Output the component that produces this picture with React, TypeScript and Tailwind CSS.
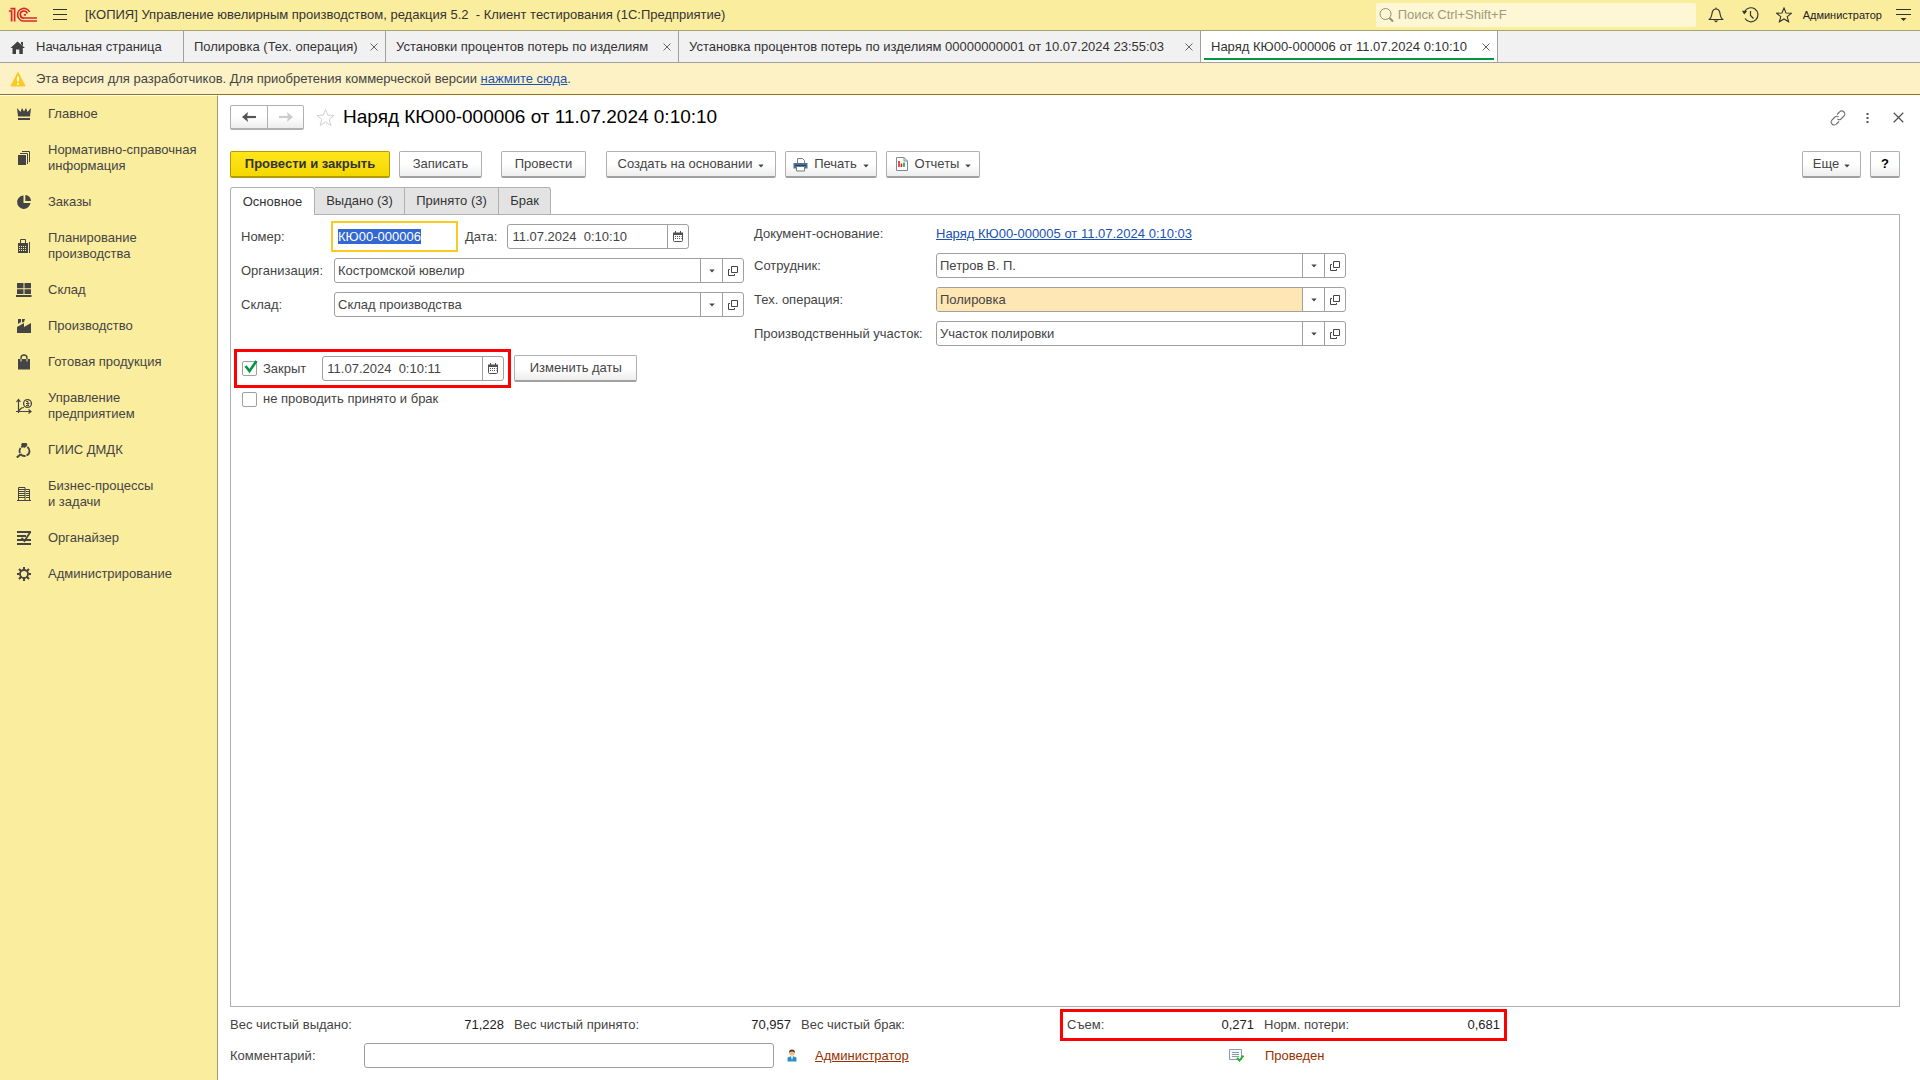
import { useEffect, useRef } from 'react'
import type { ReactNode } from 'react'

function Svg({ w = 16, h = 16, className, children }: {
  w?: number
  h?: number
  className?: string
  children: ReactNode
}) {
  return (
    <svg width={w} height={h} viewBox={`0 0 ${w} ${h}`} fill="none" className={`shrink-0 ${className ?? ''}`} aria-hidden="true">
      {children}
    </svg>
  )
}

function Logo() {
  return (
    <Svg w={30} h={16} className="text-[#d9252b]">
      <g stroke="currentColor" strokeWidth="1.7">
        <path d="M0.8 4 H3.6 V14.5" />
        <path d="M2.5 1.6 H6.6 V14.5" />
        <path d="M21.6 5 A6.3 6.3 0 1 0 16.2 14 H29" />
        <path d="M19.2 6.6 A3.5 3.5 0 1 0 16.4 11 H29" />
        <path d="M15.8 7.8 H18" />
      </g>
    </Svg>
  )
}

function Caret({ className }: { className?: string }) {
  return (
    <Svg w={6} h={4} className={className}>
      <path d="M0.3 0.4 H5.7 L3 3.5 Z" fill="#444" />
    </Svg>
  )
}

function Cross({ size = 8 }: { size?: number }) {
  return (
    <svg width={size} height={size} viewBox="0 0 9 9" fill="none" className="shrink-0" aria-hidden="true">
      <path d="M0.6 0.6 L8.4 8.4 M8.4 0.6 L0.6 8.4" stroke="#505050" strokeWidth="1" />
    </svg>
  )
}

function CalendarIcon() {
  return (
    <Svg w={10} h={11}>
      <path d="M0.5 2 V9.5 Q0.5 10.5 1.5 10.5 H8.5 Q9.5 10.5 9.5 9.5 V2" stroke="#505050" />
      <path d="M0 1.5 H10 V4 H0 Z" fill="#505050" />
      <path d="M2.5 0 V2 M7.5 0 V2" stroke="#505050" />
      <path d="M2 5.5 H8.5 M2 7.5 H8.5" stroke="#505050" strokeDasharray="1 1" />
    </Svg>
  )
}

function OpenIcon() {
  return (
    <Svg w={10} h={10}>
      <path d="M3.5 0.5 H9.5 V6.5 H3.5 Z" stroke="#444" />
      <path d="M2 3.5 H0.5 V9.5 H6.5 V8" stroke="#444" />
    </Svg>
  )
}

const SECTIONS: { title: string[]; icon: ReactNode }[] = [
  {
    title: ['Главное'],
    icon: <path d="M1 2 L4.5 6 L6 2 L8 5.5 L10 2 L11.5 6 L15 2 L14 10.5 H2 Z M2 12 H14 V14 H2 Z" fill="currentColor" />,
  },
  {
    title: ['Нормативно-справочная', 'информация'],
    icon: (
      <>
        <path d="M2 5 H10 V15 H2 Z" fill="currentColor" />
        <path d="M4 3.5 H11.5 V14 M6 1.5 H13.5 V12" stroke="currentColor" />
      </>
    ),
  },
  {
    title: ['Заказы'],
    icon: (
      <>
        <path d="M7.5 1.5 A6.7 6.7 0 1 0 14.5 9 H7.5 Z" fill="currentColor" />
        <path d="M9.3 1 A6 6 0 0 1 15 7 H9.3 Z" fill="currentColor" />
      </>
    ),
  },
  {
    title: ['Планирование', 'производства'],
    icon: (
      <>
        <path d="M4.5 5 V1.5 H9.5 V5 M13.5 4 V15" stroke="currentColor" />
        <path d="M2 5 H12 V15 H2 Z" fill="currentColor" />
        <path d="M3 8.5 H11 M3 10.5 H11 M3 12.5 H11" stroke="#fbed9e" strokeDasharray="1 1" />
      </>
    ),
  },
  {
    title: ['Склад'],
    icon: <path d="M1 1 H7.5 V6.3 H1 Z M8.5 1 H15 V6.3 H8.5 Z M1 7.3 H7.5 V12 H1 Z M8.5 7.3 H15 V12 H8.5 Z M0 13 H15.5 V15 H0 Z" fill="currentColor" />,
  },
  {
    title: ['Производство'],
    icon: <path d="M2 1 H5 V4 L2 6 Z M6 1 H9 L8 4 L6 4.5 Z M1 9 L8 5 V9 L15 5 V15 H1 Z" fill="currentColor" />,
  },
  {
    title: ['Готовая продукция'],
    icon: (
      <>
        <path d="M2 5 H14 V15.5 H2 Z" fill="currentColor" />
        <path d="M5 7 V4 A3 3 0 0 1 11 4 V7" stroke="currentColor" strokeWidth="1.4" />
        <path d="M5 5 V7.5 M11 5 V7.5" stroke="#fbed9e" />
      </>
    ),
  },
  {
    title: ['Управление', 'предприятием'],
    icon: (
      <>
        <path d="M2.5 15 V2 M0.5 4 L2.5 1.5 L4.5 4 M0 13.5 H15 M12.5 11.5 L15 13.5 L12.5 15.5 M3 12.5 L5.5 10 L8 9.5" stroke="currentColor" strokeWidth="1.2" />
        <circle cx="11.5" cy="5.5" r="3.9" stroke="currentColor" strokeWidth="1.3" />
        <path d="M10 3.5 H12 V7.5 M10 5.5 H13.5 M10 7.5 H13" stroke="currentColor" />
      </>
    ),
  },
  {
    title: ['ГИИС ДМДК'],
    icon: (
      <>
        <circle cx="8.5" cy="9" r="5" stroke="currentColor" strokeWidth="1.8" strokeDasharray="5.5 1" />
        <path d="M4.8 12.2 L0.8 15.5" stroke="currentColor" strokeWidth="2" />
        <path d="M6 1 H10.5 L11.5 3 L8.3 6 L5 3 Z" fill="currentColor" />
      </>
    ),
  },
  {
    title: ['Бизнес-процессы', 'и задачи'],
    icon: (
      <>
        <path d="M2.5 15 V1.5 H9 V15 M9 3.5 H13.5 V15 M1 14.5 H15" stroke="currentColor" />
        <path d="M3 3.5 H9 M3 5.5 H9 M3 7.5 H9 M3 9.5 H9 M3 11.5 H9 M10 5.5 H13 M10 7.5 H13 M10 9.5 H13 M10 11.5 H13" stroke="currentColor" />
      </>
    ),
  },
  {
    title: ['Органайзер'],
    icon: <path d="M1 2 H15 M1 6 H10 M1 10 H15 M1 14 H15 M14 2.5 L8.5 11 L5.5 8" stroke="currentColor" strokeWidth="1.8" />,
  },
  {
    title: ['Администрирование'],
    icon: (
      <>
        <circle cx="8" cy="8" r="4" stroke="currentColor" strokeWidth="1.8" />
        <path d="M8 1 V3.5 M8 12.5 V15 M1 8 H3.5 M12.5 8 H15 M3 3 L5 5 M11 11 L13 13 M13 3 L11 5 M5 11 L3 13" stroke="currentColor" strokeWidth="2" />
      </>
    ),
  },
]

const OPEN_TABS = [
  { title: 'Полировка (Тех. операция)', width: 'w-[202px]' },
  { title: 'Установки процентов потерь по изделиям', width: 'w-[293px]' },
  { title: 'Установка процентов потерь по изделиям 00000000001 от 10.07.2024 23:55:03', width: 'w-[522px]' },
  { title: 'Наряд КЮ00-000006 от 11.07.2024 0:10:10', width: 'w-[297px]' },
]

const PAGES = [
  { title: 'Основное', width: 'w-[85px]' },
  { title: 'Выдано (3)', width: 'w-[90px]' },
  { title: 'Принято (3)', width: 'w-[94px]' },
  { title: 'Брак', width: 'w-[52px]' },
]

function Button({ children, className }: { children: ReactNode; className?: string }) {
  return (
    <button
      type="button"
      className={`flex h-[27px] items-center justify-center rounded-[2px] border border-b-2 border-[#b0b0b0] border-b-[#a0a0a0] bg-linear-to-b from-white from-50% to-[#ededed] whitespace-nowrap ${className ?? ''}`}
    >
      {children}
    </button>
  )
}

function DateField({ id, value }: { id: string; value: string }) {
  return (
    <div className="flex h-[25px] w-[182px] rounded-[3px] border border-[#a0a0a0] bg-white">
      <input id={id} defaultValue={value} className="min-w-0 flex-1 px-1 outline-none" />
      <button type="button" aria-label="Выбрать дату" className="flex w-[21px] items-center justify-center border-l border-[#a0a0a0]">
        <CalendarIcon />
      </button>
    </div>
  )
}

function RefField({ id, value, fill }: { id: string; value: string; fill?: string }) {
  return (
    <div className="flex h-[25px] w-[410px] rounded-[3px] border border-[#a0a0a0] bg-white">
      <div className="relative flex flex-1">
        <select id={id} className={`flex-1 appearance-none rounded-l-[2px] px-[3px] outline-none ${fill ?? ''}`}>
          <option>{value}</option>
        </select>
        <span className="pointer-events-none absolute inset-y-0 right-0 flex w-[22px] items-center justify-center border-l border-[#a0a0a0] bg-white">
          <Caret />
        </span>
      </div>
      <button type="button" aria-label="Открыть" className="flex w-[21px] items-center justify-center border-l border-[#a0a0a0]">
        <OpenIcon />
      </button>
    </div>
  )
}

function Check({ id, label, checked }: { id: string; label: string; checked?: boolean }) {
  return (
    <div className="flex items-center gap-[6px]">
      <span className="relative flex">
        <input id={id} type="checkbox" defaultChecked={checked} className="peer size-[15px] appearance-none rounded-[2px] border border-[#a0a0a0] bg-white" />
        <span className="pointer-events-none absolute -top-px left-[2px] hidden peer-checked:block">
          <Svg w={14} h={13}>
            <path d="M1.5 6 L5.5 11 L12.5 1" stroke="#009646" strokeWidth="2.6" />
          </Svg>
        </span>
      </span>
      <label htmlFor={id}>{label}</label>
    </div>
  )
}

function TopBar() {
  return (
    <header className="flex h-[31px] items-center border-b border-[#a9a36c] bg-[#fbed9e] pr-[9px] pl-2">
      <Logo />
      <button type="button" aria-label="Меню" className="ml-[15px]">
        <Svg w={14} h={12}>
          <path d="M0 0.5 H14 M0 5.5 H14 M0 10.5 H14" stroke="#333" />
        </Svg>
      </button>
      <div className="ml-[18px] whitespace-pre">[КОПИЯ] Управление ювелирным производством, редакция 5.2  - Клиент тестирования (1С:Предприятие)</div>

      <div className="ml-auto flex h-6 w-80 items-center gap-1 rounded-[2px] bg-[#fdf7d5] pl-[3px]">
        <Svg w={15} h={16} className="text-[#96906f]">
          <circle cx="6.5" cy="7" r="5.5" stroke="currentColor" />
          <path d="M10.5 11 L14 14.5" stroke="currentColor" strokeWidth="2" />
        </Svg>
        <input aria-label="Поиск" placeholder="Поиск Ctrl+Shift+F" className="min-w-0 flex-1 outline-none placeholder:text-[#a09a7c]" />
      </div>
      <button type="button" aria-label="Уведомления" className="ml-3">
        <Svg>
          <path d="M1.5 12.5 H14.5 C11.5 9.5 12.5 7 11.5 4.5 C11 3 10 2 8 2 C6 2 5 3 4.5 4.5 C3.5 7 4.5 9.5 1.5 12.5 Z" stroke="#333" strokeWidth="1.2" />
          <path d="M5.5 13.5 H10.5 L8 15.5 Z" fill="#333" />
          <path d="M8 0.5 V2" stroke="#333" />
        </Svg>
      </button>
      <button type="button" aria-label="История" className="ml-[18px]">
        <Svg w={17} h={16}>
          <path d="M2.5 5 A7 7 0 1 1 3 11.5" stroke="#333" strokeWidth="1.2" />
          <path d="M0 3.8 L5.2 4 L2.2 7.5 Z" fill="#333" />
          <path d="M8.5 4 V8.5 L11.5 11.5" stroke="#333" strokeWidth="1.2" />
        </Svg>
      </button>
      <button type="button" aria-label="Избранное" className="ml-[17px]">
        <Svg>
          <path d="M8 1 L10 6 L15.3 6.3 L11.2 9.7 L12.6 14.8 L8 12 L3.4 14.8 L4.8 9.7 L0.7 6.3 L6 6 Z" stroke="#333" strokeWidth="1.1" />
        </Svg>
      </button>
      <a href="#user" className="ml-[11px] text-[11px] text-[#222]">Администратор</a>
      <button type="button" aria-label="Настройки" className="ml-[14px]">
        <Svg w={15} h={14}>
          <path d="M0 1.5 H15 M0 6.5 H15" stroke="#333" strokeWidth="1.2" />
          <path d="M4.5 10 H10.5 L7.5 13 Z" fill="#333" />
        </Svg>
      </button>
    </header>
  )
}

function WindowTabs() {
  return (
    <nav className="flex h-8 border-b border-[#a0a0a0] bg-[#f1f1f1]">
      <a href="#home" className="flex w-[184px] items-center gap-[10px] border-r border-[#a0a0a0] pl-[10px]">
        <Svg>
          <path d="M7.5 2.5 L15 9 H12.8 V15 H9.3 V10.5 H6 V15 H2.5 V9 H0.5 Z M11 3 H13 V7 L11 5 Z" fill="#404040" />
        </Svg>
        Начальная страница
      </a>
      {OPEN_TABS.map((tab, i) => {
        const active = i === OPEN_TABS.length - 1
        return (
          <div
            key={tab.title}
            className={`relative flex items-center justify-between border-r border-[#a0a0a0] pr-[7px] pl-[10px] whitespace-nowrap ${tab.width} ${active ? 'bg-white' : ''}`}
          >
            <a href="#tab">{tab.title}</a>
            <button type="button" aria-label="Закрыть"><Cross /></button>
            {active && <span className="absolute right-[3px] bottom-[2px] left-[3px] h-[2px] bg-[#009646]" />}
          </div>
        )
      })}
    </nav>
  )
}

function Sidebar() {
  return (
    <nav className="w-[218px] shrink-0 border-t border-r border-t-white border-r-[#a09a6c] bg-[#fbed9e]">
      {SECTIONS.map(s => (
        <a key={s.title[0]} href="#section" className="flex items-center gap-4 py-[10px] pl-4 leading-4">
          <Svg className="text-[#444]">{s.icon}</Svg>
          <span>
            {s.title.map(line => <span key={line} className="block">{line}</span>)}
          </span>
        </a>
      ))}
    </nav>
  )
}

function FormHeader() {
  return (
    <div className="flex h-[25px] items-center">
      <div className="flex h-[25px] rounded-[2px] border border-b-2 border-[#b0b0b0] bg-linear-to-b from-white from-50% to-[#ededed]">
        <button type="button" aria-label="Назад" className="flex w-[37px] items-center justify-center border-r border-[#b0b0b0]">
          <Svg w={14} h={10}>
            <path d="M14 5 H3" stroke="#555" strokeWidth="2.2" />
            <path d="M6 0 L0 5 L6 10 L5 5 Z" fill="#555" />
          </Svg>
        </button>
        <button type="button" aria-label="Вперед" className="flex w-[35px] items-center justify-center">
          <Svg w={14} h={10}>
            <path d="M0 5 H11" stroke="#ccc" strokeWidth="2.2" />
            <path d="M8 0 L14 5 L8 10 L9 5 Z" fill="#ccc" />
          </Svg>
        </button>
      </div>
      <button type="button" aria-label="В избранное" className="ml-3">
        <Svg w={19} h={19}>
          <path d="M9.5 1.5 L11.8 7.2 L18 7.5 L13.2 11.4 L14.9 17.5 L9.5 14 L4.1 17.5 L5.8 11.4 L1 7.5 L7.2 7.2 Z" stroke="#d0d0d0" />
        </Svg>
      </button>
      <h1 className="ml-2 pb-[2px] text-[19px] text-black">Наряд КЮ00-000006 от 11.07.2024 0:10:10</h1>
      <div className="-mr-1 ml-auto flex items-center">
        <button type="button" aria-label="Ссылка">
          <Svg>
            <path d="M7 4.5 L9.5 2 A2.8 2.8 0 0 1 14 6 L11 9 A2.6 2.6 0 0 1 7.5 9 M9 11.5 L6.5 14 A2.8 2.8 0 0 1 2 10 L5 7 A2.6 2.6 0 0 1 8.5 7" stroke="#707070" strokeWidth="1.1" />
          </Svg>
        </button>
        <button type="button" aria-label="Еще" className="ml-5">
          <Svg w={3} h={12}>
            <path d="M0.5 1 H2.5 V3 H0.5 Z M0.5 5 H2.5 V7 H0.5 Z M0.5 9 H2.5 V11 H0.5 Z" fill="#555" />
          </Svg>
        </button>
        <button type="button" aria-label="Закрыть" className="ml-6"><Cross size={11} /></button>
      </div>
    </div>
  )
}

function Toolbar() {
  return (
    <div className="mt-[21px] flex items-center">
      <button type="button" className="h-[27px] w-40 rounded-[2px] border border-b-2 border-[#b39b00] bg-linear-to-b from-[#ffe51a] to-[#f5d800] font-bold text-[#333]">
        Провести и закрыть
      </button>
      <Button className="ml-[9px] w-[83px]">Записать</Button>
      <Button className="ml-[19px] w-[85px]">Провести</Button>
      <Button className="ml-5 w-[170px] gap-[6px]">Создать на основании <Caret className="mt-1" /></Button>
      <Button className="ml-[9px] w-[92px] gap-[6px]">
        <Svg w={15} h={15}>
          <path d="M4.5 6 V1.5 H9.5 L11.5 3.5 V6" fill="#fff" stroke="#6d7f92" />
          <path d="M0.5 6 H14.5 V11.5 H0.5 Z" fill="#4a7096" />
          <path d="M2 8.5 H13" stroke="#23415f" />
          <path d="M3.5 9.5 H11.5 V14 H3.5 Z" fill="#fff" stroke="#6d7f92" />
        </Svg>
        Печать <Caret className="mt-1" />
      </Button>
      <Button className="ml-[9px] w-[94px] gap-[6px]">
        <Svg w={14} h={14}>
          <path d="M1.5 0.5 H9 L12.5 4 V13.5 H1.5 Z" fill="#fff" stroke="#7d8b99" />
          <path d="M9 0.5 V4 H12.5" stroke="#7d8b99" />
          <path d="M4 4 V10 M6.5 6.5 V10" stroke="#e02020" strokeWidth="1.6" />
          <path d="M9 5.5 V10" stroke="#20a030" strokeWidth="1.6" />
        </Svg>
        Отчеты <Caret className="mt-1" />
      </Button>
      <Button className="ml-auto w-[59px] gap-[5px]">Еще <Caret className="mt-1" /></Button>
      <Button className="ml-[9px] w-[30px] font-bold text-black">?</Button>
    </div>
  )
}

function MainPage() {
  const numberRef = useRef<HTMLInputElement>(null)

  useEffect(() => {
    numberRef.current?.focus()
    numberRef.current?.select()
  }, [])

  return (
    <div className="flex pt-[6px] pl-[3px]">
      <div>
        <div className="flex items-center pl-[7px]">
          <label htmlFor="number" className="w-[90px]">Номер:</label>
          <input
            id="number"
            ref={numberRef}
            defaultValue="КЮ00-000006"
            className="h-[31px] w-[127px] border-2 border-[#fbca1f] px-[5px] outline-none selection:bg-[#3367d1] selection:text-white"
          />
          <label htmlFor="date" className="mr-[10px] ml-[7px]">Дата:</label>
          <DateField id="date" value="11.07.2024  0:10:10" />
        </div>
        <div className="mt-[6px] flex items-center pl-[7px]">
          <label htmlFor="org" className="w-[93px]">Организация:</label>
          <RefField id="org" value="Костромской ювелир" />
        </div>
        <div className="mt-[9px] flex items-center pl-[7px]">
          <label htmlFor="store" className="w-[93px]">Склад:</label>
          <RefField id="store" value="Склад производства" />
        </div>
        <div className="mt-8 flex items-center gap-[3px]">
          <div className="flex h-[39px] items-center gap-4 border-3 border-[#fe0000] pr-1 pl-[5px]">
            <Check id="closed" label="Закрыт" checked />
            <DateField id="closedDate" value="11.07.2024  0:10:11" />
          </div>
          <Button className="w-[123px]">Изменить даты</Button>
        </div>
        <div className="mt-[3px] pl-2">
          <Check id="noPost" label="не проводить принято и брак" />
        </div>
      </div>

      <div className="ml-[10px] grid grid-cols-[182px_auto] items-center gap-y-[9px] self-start pt-[3px]">
        <span>Документ-основание:</span>
        <a href="#base" className="w-fit leading-5 text-[#1a52b5] underline">Наряд КЮ00-000005 от 11.07.2024 0:10:03</a>
        <label htmlFor="employee">Сотрудник:</label>
        <RefField id="employee" value="Петров В. П." />
        <label htmlFor="operation">Тех. операция:</label>
        <RefField id="operation" value="Полировка" fill="bg-[#ffe6b4]" />
        <label htmlFor="area">Производственный участок:</label>
        <RefField id="area" value="Участок полировки" />
      </div>
    </div>
  )
}

function Total({ label, value, className }: { label: string; value?: string; className: string }) {
  return (
    <div className={`flex justify-between ${className}`}>
      <span>{label}</span>
      <span className="text-[#222]">{value}</span>
    </div>
  )
}

function Footer() {
  return (
    <footer className="pt-[2px] pb-3">
      <div className="flex h-8 items-center">
        <Total label="Вес чистый выдано:" value="71,228" className="w-[274px]" />
        <Total label="Вес чистый принято:" value="70,957" className="ml-[10px] w-[277px]" />
        <Total label="Вес чистый брак:" className="ml-[10px] w-[259px]" />
        <div className="flex h-8 items-center gap-[10px] border-3 border-[#fe0000] px-1">
          <Total label="Съем:" value="0,271" className="w-[187px]" />
          <Total label="Норм. потери:" value="0,681" className="w-[236px]" />
        </div>
      </div>
      <div className="mt-[2px] flex items-center">
        <label htmlFor="comment" className="w-[134px]">Комментарий:</label>
        <input id="comment" className="h-[25px] w-[410px] rounded-[3px] border border-[#a0a0a0] px-1 outline-none" />
        <Svg w={10} h={13} className="ml-[13px]">
          <path d="M0.5 12.5 V9.5 C0.5 8 2 7.5 5 7.5 C8 7.5 9.5 8 9.5 9.5 V12.5 Z" fill="#2f8fc4" />
          <path d="M4 7.5 H6 L5 11 Z" fill="#fff" />
          <circle cx="5" cy="4" r="2.8" fill="#efbe86" />
          <path d="M2 4 C1.5 -0.8 8.5 -0.8 8 4 C7 2 3 2 2 4 Z" fill="#4a3520" />
        </Svg>
        <div className="ml-[18px] w-[414px]">
          <a href="#author" className="text-[#963200] underline">Администратор</a>
        </div>
        <Svg w={15} h={13}>
          <path d="M0.5 0.5 H12.5 V10.5 H0.5 Z" fill="#f5f8fb" stroke="#8b9cab" />
          <path d="M3 3.5 H10 M3 5.5 H10 M3 7.5 H10" stroke="#8b9cab" />
          <path d="M8 9 L10.5 11.5 L14.5 6.5" stroke="#28b02c" strokeWidth="2" />
        </Svg>
        <span className="ml-[21px] text-[#963200]">Проведен</span>
      </div>
    </footer>
  )
}

export default function App() {
  return (
    <div className="flex min-h-screen flex-col bg-white font-['Liberation_Sans',Arial,sans-serif] text-[13px] leading-4 text-[#444]">
      <div className="text-[#333]">
        <TopBar />
        <WindowTabs />
      </div>
      <div className="flex h-8 items-center gap-[10px] border-b border-[#94761a] bg-[#fdf2c6] pl-[10px]">
        <Svg>
          <path d="M8 1.5 L15 15 H1 Z" fill="#fbca1f" stroke="#fbca1f" strokeLinejoin="round" />
          <path d="M8 5.5 V10.5 M8 12 V13.8" stroke="#fff" strokeWidth="1.8" />
        </Svg>
        <p>
          Эта версия для разработчиков. Для приобретения коммерческой версии{' '}
          <a href="#buy" className="text-[#1a52b5] underline">нажмите сюда</a>.
        </p>
      </div>

      <div className="flex flex-1">
        <Sidebar />
        <main className="flex min-w-0 flex-1 flex-col pt-[10px] pr-5 pl-3">
          <FormHeader />
          <Toolbar />

          <div role="tablist" className="relative mt-[9px] flex text-[#333]">
            {PAGES.map((page, i) => (
              <button
                key={page.title}
                type="button"
                role="tab"
                aria-selected={i === 0}
                className={`border border-b-0 border-[#b0b0b0] ${page.width} ${i === 0
                  ? 'relative -mb-px h-7 rounded-t-[3px] bg-white'
                  : 'h-[27px] border-l-0 bg-[#e3e3e3] last:rounded-tr-[3px]'}`}
              >
                {page.title}
              </button>
            ))}
          </div>
          <section className="flex-1 border border-[#b0b0b0]">
            <MainPage />
          </section>

          <Footer />
        </main>
      </div>
    </div>
  )
}
